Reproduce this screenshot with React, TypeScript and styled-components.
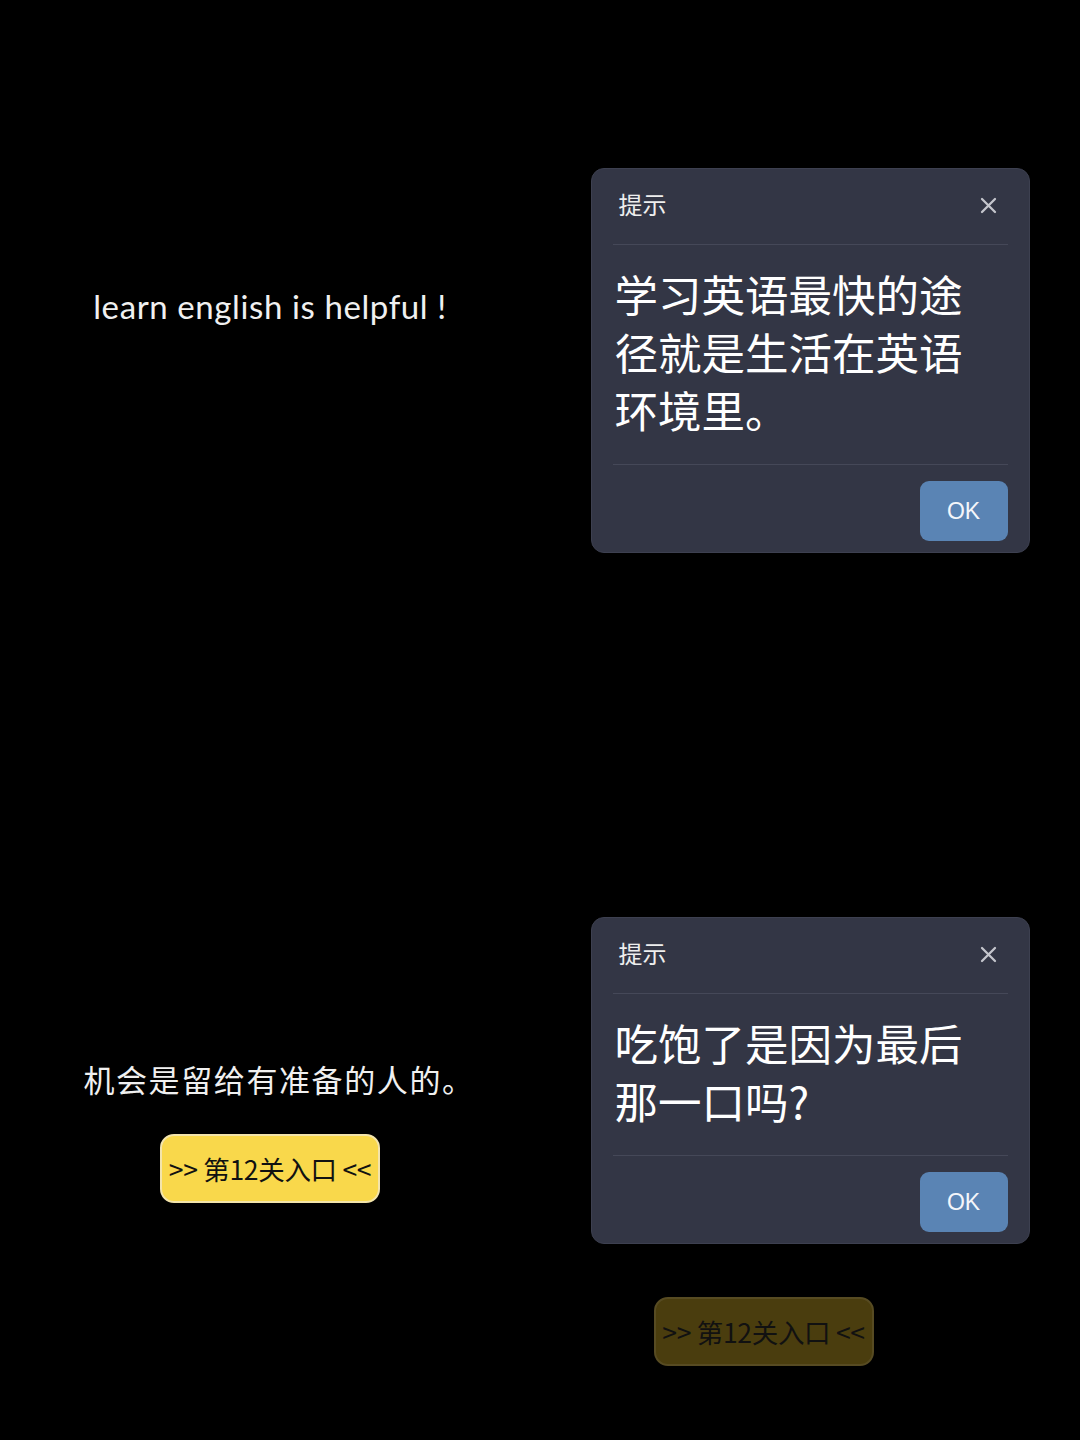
import React from 'react'
import styled, { createGlobalStyle } from 'styled-components'

const GlobalStyle = createGlobalStyle`
  html, body {
    margin: 0;
    padding: 0;
    background: #000;
  }
  body {
    font-family: Lato, "Noto Sans CJK SC", sans-serif;
  }
`

const Board = styled.div`
  display: grid;
  grid-template-columns: 540px 540px;
  grid-template-rows: 720px 720px;
  width: 1080px;
  height: 1440px;
  background: #000;
`

const Cell = styled.div<{ top: number }>`
  display: flex;
  flex-direction: column;
  align-items: center;
  padding-top: ${({ top }) => top}px;
  box-sizing: border-box;
`

const Caption = styled.p<{ size: number; spacing?: number; indent?: number }>`
  margin: 0 0 0 ${({ indent }) => indent ?? 0}px;
  color: #f0f0f0;
  font-family: Lato, "Noto Sans CJK SC", sans-serif;
  font-size: ${({ size }) => size}px;
  line-height: 40px;
  letter-spacing: ${({ spacing }) => spacing ?? 0}px;
`

const EntryButton = styled.button<{ dimmed?: boolean; shift?: number }>`
  box-sizing: border-box;
  width: 220px;
  height: 69px;
  margin-right: ${({ shift }) => shift ?? 0}px;
  border-radius: 14px;
  border: 2px solid ${({ dimmed }) => (dimmed ? '#574b22' : '#f3e4ab')};
  background: ${({ dimmed }) => (dimmed ? '#4a3d0e' : '#f9d84b')};
  color: #111;
  font-family: "Noto Sans CJK SC", sans-serif;
  font-size: 26.5px;
  letter-spacing: -0.3px;
  padding: 0;
  display: flex;
  align-items: center;
  justify-content: center;
`

const Dialog = styled.div`
  box-sizing: border-box;
  width: 439px;
  background: #333645;
  border: 1px solid #3d4050;
  border-radius: 13px;
  padding: 0 21px;
  display: flex;
  flex-direction: column;
`

const DialogHeader = styled.div`
  box-sizing: border-box;
  height: 76px;
  display: flex;
  align-items: center;
  justify-content: space-between;
  padding: 0 9px 6px 6px;
  border-bottom: 1px solid #454858;
`

const DialogTitle = styled.span`
  color: #eeeeee;
  font-family: "Noto Sans CJK SC", sans-serif;
  font-size: 24px;
`

const CloseButton = styled.button`
  background: none;
  border: none;
  padding: 0;
  width: 20px;
  height: 20px;
  margin-top: 4px;
  display: flex;
  align-items: center;
  justify-content: center;
  color: #c4c5cc;
`

const DialogBody = styled.div`
  padding: 20px 40px 25px 2px;
  color: #ffffff;
  font-family: "Noto Sans CJK SC", sans-serif;
  font-size: 43.5px;
  line-height: 58px;
  border-bottom: 1px solid #454858;
  word-break: break-all;
`

const DialogFooter = styled.div`
  display: flex;
  justify-content: flex-end;
  padding: 16px 0 11px;
`

const OkButton = styled.button`
  width: 88px;
  height: 60px;
  border: none;
  border-radius: 9px;
  background: #5a84b4;
  color: #f4f6fa;
  font-family: "Liberation Sans", Arial, sans-serif;
  font-size: 23px;
`

const Gap = styled.div<{ h: number }>`
  height: ${({ h }) => h}px;
  flex-shrink: 0;
`

function CloseIcon() {
  return (
    <svg width="17" height="17" viewBox="0 0 17 17">
      <path d="M2 2 L15 15 M15 2 L2 15" stroke="currentColor" strokeWidth="2.3" strokeLinecap="round" />
    </svg>
  )
}

function Tip({ text }: { text: string }) {
  return (
    <Dialog>
      <DialogHeader>
        <DialogTitle>提示</DialogTitle>
        <CloseButton>
          <CloseIcon />
        </CloseButton>
      </DialogHeader>
      <DialogBody>{text}</DialogBody>
      <DialogFooter>
        <OkButton>OK</OkButton>
      </DialogFooter>
    </Dialog>
  )
}

export default function App() {
  return (
    <>
      <GlobalStyle />
      <Board>
        <Cell top={286}>
          <Caption size={33} spacing={0.6}>learn english is helpful !</Caption>
        </Cell>
        <Cell top={168}>
          <Tip text="学习英语最快的途径就是生活在英语环境里。" />
        </Cell>
        <Cell top={340}>
          <Caption size={31} spacing={1.6} indent={18}>机会是留给有准备的人的。</Caption>
          <Gap h={34} />
          <EntryButton>&gt;&gt; 第12关入口 &lt;&lt;</EntryButton>
        </Cell>
        <Cell top={197}>
          <Tip text="吃饱了是因为最后那一口吗?" />
          <Gap h={53} />
          <EntryButton dimmed shift={93}>&gt;&gt; 第12关入口 &lt;&lt;</EntryButton>
        </Cell>
      </Board>
    </>
  )
}
